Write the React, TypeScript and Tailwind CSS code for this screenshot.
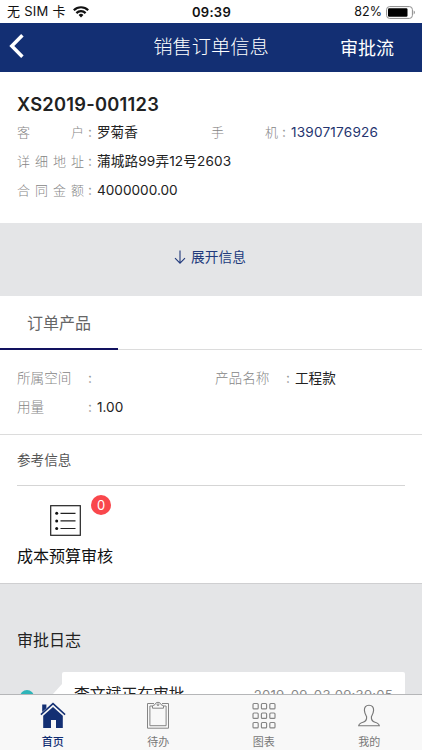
import { ReactNode } from "react";
import clsx from "clsx";

function StatusBar() {
  return (
    <div className="flex h-[23px] shrink-0 items-center justify-between bg-white pl-[7px] pr-[6px] text-[13px] leading-none text-[#111]">
      <div className="flex flex-1 items-center gap-[7px]">
        <span className="whitespace-nowrap tracking-[0.25px]">无 SIM 卡</span>
        <svg className="h-[12px] w-[16px]" viewBox="0 0 16 12" fill="none" stroke="#111" strokeWidth="2.2">
          <path d="M0.8 4.2A10.3 10.3 0 0 1 15.2 4.2" />
          <path d="M3.4 7.1A6.5 6.5 0 0 1 12.6 7.1" />
          <path d="M8 11.4 5.6 9A3.5 3.5 0 0 1 10.4 9Z" fill="#111" stroke="none" />
        </svg>
      </div>
      <span className="pt-[1px] text-[13px] font-semibold tracking-[0.3px]">09:39</span>
      <div className="flex flex-1 items-center justify-end gap-[4px] pt-[1px]">
        <span className="pt-[1px] text-[12.5px]">82%</span>
        <svg className="h-[13px] w-[30px]" viewBox="0 0 30 13">
          <rect x="0.6" y="0.6" width="25.8" height="11.8" rx="3" fill="none" stroke="#8a8a8a" strokeWidth="1" />
          <rect x="2" y="2.2" width="19.5" height="8.6" rx="1.2" fill="#000" />
          <path d="M27.7 4.6C29.3 5.2 29.3 7.8 27.7 8.4Z" fill="#8a8a8a" />
        </svg>
      </div>
    </div>
  );
}

function Header() {
  return (
    <header className="grid h-[49px] shrink-0 grid-cols-[1fr_auto_1fr] items-center bg-[#132f73] text-white">
      <button aria-label="返回" className="pb-[3px] pl-[9px]">
        <svg className="h-[26px] w-[16px]" viewBox="0 0 16 26" fill="none" stroke="#fff" strokeWidth="3.5">
          <path d="M13.4 2.3 2.8 13 13.4 23.7" />
        </svg>
      </button>
      <h1 className="pt-[1px] text-[19.3px] leading-none font-light">销售订单信息</h1>
      <button className="pr-[28px] pt-[2px] text-right text-[18px] leading-none">审批流</button>
    </header>
  );
}

function Field({ label, spread, light, children, className }: { label: string; spread?: boolean; light?: boolean; children?: ReactNode; className?: string }) {
  return (
    <div className={clsx("flex h-[29px] items-center whitespace-nowrap text-[13.6px]", className)}>
      <span className={clsx("w-[67px] font-light text-[#858585]", spread && "[text-align-last:justify] text-[13px]", light && "text-[#8a8a8a]")}>{label}</span>
      <span className="w-[13px] pl-[4px] text-[#999]">:</span>
      <span className="text-[#222]">{children}</span>
    </div>
  );
}

const tabs = [
  {
    label: "首页",
    icon: (
      <svg className="h-[28px] w-[26px]" viewBox="0 0 26 28">
        <path d="M3.2 14.8 13 5.9 22.8 14.8V27H16V19H11V27H3.2Z" fill="#132f73" />
        <path d="M0.9 13.6 13 2.6 25.1 13.6" fill="none" stroke="#132f73" strokeWidth="1.5" />
        <path d="M2.2 3.4H6.4V7.2L2.2 11Z" fill="#132f73" />
      </svg>
    ),
  },
  {
    label: "待办",
    icon: (
      <svg className="h-[28px] w-[26px]" viewBox="0 0 26 28" fill="none" stroke="#858585" strokeWidth="1">
        <path d="M9 2.5H2.5V27.2H23.5V2.5H17" />
        <path d="M7.5 5H4.9V24.7H21.1V5H18.5" />
        <path d="M7.5 7.2V4.8L10 3.6A3.1 3.1 0 0 1 16 3.6L18.5 4.8V7.2Z" />
        <circle cx="13" cy="3.7" r="0.9" />
      </svg>
    ),
  },
  {
    label: "图表",
    icon: (
      <svg className="h-[28px] w-[26px]" viewBox="0 0 26 28" fill="none" stroke="#858585" strokeWidth="1.15">
        {[2.5, 12, 21.5].map((y) =>
          [2, 10.4, 18.8].map((x) => <rect key={`${x}-${y}`} x={x} y={y} width="5.2" height="5.4" rx="1" />)
        )}
      </svg>
    ),
  },
  {
    label: "我的",
    icon: (
      <svg className="h-[28px] w-[26px]" viewBox="0 0 26 28" fill="none" stroke="#777" strokeWidth="1.15">
        <path d="M13 4.2C9.8 4.2 8.3 6.3 8.4 9.2C8.5 12 9.7 14 10.6 15.7C10.9 18.9 10.2 20.2 7 21.2C4.6 21.9 3 22.4 2.7 24.7H23.3C23 22.4 21.4 21.9 19 21.2C15.8 20.2 15.1 18.9 15.4 15.7C16.3 14 17.5 12 17.6 9.2C17.7 6.3 16.2 4.2 13 4.2Z" />
      </svg>
    ),
  },
];

function TabBar() {
  return (
    <nav className="grid h-[56px] shrink-0 grid-cols-4 border-t border-[#b5b6b8] bg-[#f8f8f8]">
      {tabs.map((tab, i) => (
        <button key={tab.label} className="flex flex-col items-center pt-[6px]">
          {tab.icon}
          <span className={clsx("mt-[8px] text-[11px] leading-[11px]", i === 0 ? "font-medium text-[#132f73]" : "text-[#777]")}>{tab.label}</span>
        </button>
      ))}
    </nav>
  );
}

export default function App() {
  return (
    <div className="flex h-[750px] w-[422px] flex-col overflow-hidden bg-[#e4e5e7] font-[Inter,'Noto_Sans_CJK_SC',sans-serif]">
      <StatusBar />
      <Header />
      <main className="min-h-0 flex-1 overflow-hidden">
        <section className="h-[151px] bg-white px-[17px] pt-[20px]">
          <h2 className="h-[26px] text-[18.3px] leading-[25px] font-semibold tracking-[0.25px] text-[#222]">XS2019-001123</h2>
          <div className="flex">
            <Field label="客户" spread className="w-[194px]">罗菊香</Field>
            <Field label="手机" spread>
              <span className="tracking-[0.2px] text-[#25356f]">13907176926</span>
            </Field>
          </div>
          <Field label="详细地址" spread>
            <span className="tracking-[0.15px]">蒲城路99弄12号2603</span>
          </Field>
          <Field label="合同金额" spread>4000000.00</Field>
        </section>

        <button className="flex h-[73px] w-full items-center justify-center gap-[5px] pt-[2px] pr-[2px] pb-[6px] text-[13.7px] text-[#213a7c]">
          <svg className="h-[15px] w-[12px]" viewBox="0 0 12 15" fill="none" stroke="#213a7c" strokeWidth="1.1">
            <path d="M6 0.4V13.1M1 8.2 6 13.2 11 8.2" />
          </svg>
          展开信息
        </button>

        <div className="flex h-[54px] border-b border-[#dcdcdc] bg-white">
          <button className="h-[54px] w-[118px] border-b-2 border-[#12125f] pt-[1px] text-[16px] text-[#666]">订单产品</button>
        </div>

        <section className="h-[85px] border-b-[1.5px] border-[#dcdcdc] bg-white px-[17px] pt-[14px]">
          <div className="flex">
            <Field label="所属空间" light className="w-[198px]" />
            <Field label="产品名称" light>工程款</Field>
          </div>
          <Field label="用量" light>1.00</Field>
        </section>

        <section className="h-[149px] border-b border-[#cfcfd1] bg-white px-[17px]">
          <h3 className="h-[51px] border-b border-[#d5d5d5] text-[13.6px] leading-[51px] text-[#555]">参考信息</h3>
          <button className="relative flex w-[96px] flex-col items-center pt-[19px]">
            <svg className="h-[31px] w-[31px]" viewBox="0 0 31 31" fill="none" stroke="#222" strokeWidth="1.2">
              <rect x="0.7" y="0.7" width="29.6" height="29.6" />
              <path d="M10.5 8.3H25.5M10.5 15.9H25.5M10.5 23.5H25.5" />
              <g fill="#111" stroke="none">
                <circle cx="6.7" cy="8.3" r="1.5" />
                <circle cx="6.7" cy="15.9" r="1.5" />
                <circle cx="6.7" cy="23.5" r="1.5" />
              </g>
            </svg>
            <span className="absolute top-[9px] left-[74px] flex size-[20px] items-center justify-center rounded-full bg-[#f9474c] text-[13px] leading-none text-white">0</span>
            <span className="mt-[8px] text-[16px] leading-[24px] whitespace-nowrap text-[#111]">成本预算审核</span>
          </button>
        </section>

        <section className="px-[17px] pt-[44px]">
          <h3 className="text-[16px] leading-[24px] text-[#222]">审批日志</h3>
          <div className="mt-[20px] flex">
            <div className="flex w-[36px] justify-start pt-[18px] pl-[3px]">
              <span className="size-[14px] rounded-full bg-[#2fb5b9]" />
            </div>
            <svg className="mt-[11px] h-[22px] w-[9px]" viewBox="0 0 9 22">
              <path d="M9 1V21L0 11Z" fill="#fff" />
            </svg>
            <div className="flex h-[60px] w-[343px] items-start justify-between rounded-[2px] bg-white pt-[11px] pr-[12px] pl-[12px] whitespace-nowrap">
              <span className="text-[15.8px] leading-[24px] text-[#222]">李文斌正在审批</span>
              <span className="text-[13.2px] leading-[24px] tracking-[0.2px] text-[#888]">2019-09-03 09:39:05</span>
            </div>
          </div>
        </section>
      </main>
      <TabBar />
    </div>
  );
}
